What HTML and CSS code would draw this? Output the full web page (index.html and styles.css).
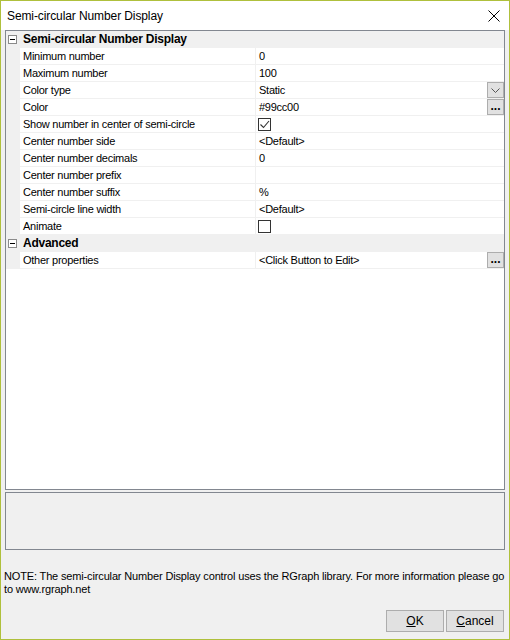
FILE: index.html
```html
<!DOCTYPE html>
<html lang="en">
<head>
    <meta charset="UTF-8">
    <meta name="viewport" content="width=device-width, initial-scale=1.0">
    <title>Semi-circular Number Display</title>
    <link rel="stylesheet" href="styles.css">
</head>
<body>

    <div class="window">
        <div class="titlebar">
            <span class="title">Semi-circular Number Display</span>
            <svg class="close" width="12" height="12" viewBox="0 0 12 12">
                <path d="M0.5 0.5 L11.5 11.5 M11.5 0.5 L0.5 11.5" stroke="#000" stroke-width="1" fill="none"/>
            </svg>
        </div>

        <div class="client">
            <div class="grid">
                <div class="category">
                    <span class="toggle"></span>
                    <span class="cat-name">Semi-circular Number Display</span>
                </div>
                <div class="prop"><div class="gutter"></div><div class="name">Minimum number</div><div class="value">0</div></div>
                <div class="prop"><div class="gutter"></div><div class="name">Maximum number</div><div class="value">100</div></div>
                <div class="prop"><div class="gutter"></div><div class="name">Color type</div><div class="value">Static<span class="btn-drop"><svg width="9" height="5" viewBox="0 0 9 5"><path d="M0.5 0.5 L4.5 4.5 L8.5 0.5" stroke="#555" fill="none"/></svg></span></div></div>
                <div class="prop"><div class="gutter"></div><div class="name">Color</div><div class="value">#99cc00<span class="btn-more">...</span></div></div>
                <div class="prop"><div class="gutter"></div><div class="name">Show number in center of semi-circle</div><div class="value"><span class="check"><svg width="11" height="11" viewBox="0 0 11 11"><path d="M1.5 5.5 L4.5 8.5 L10 2" stroke="#333" stroke-width="1.1" fill="none"/></svg></span></div></div>
                <div class="prop"><div class="gutter"></div><div class="name">Center number side</div><div class="value">&lt;Default&gt;</div></div>
                <div class="prop"><div class="gutter"></div><div class="name">Center number decimals</div><div class="value">0</div></div>
                <div class="prop"><div class="gutter"></div><div class="name">Center number prefix</div><div class="value"></div></div>
                <div class="prop"><div class="gutter"></div><div class="name">Center number suffix</div><div class="value">%</div></div>
                <div class="prop"><div class="gutter"></div><div class="name">Semi-circle line width</div><div class="value">&lt;Default&gt;</div></div>
                <div class="prop"><div class="gutter"></div><div class="name">Animate</div><div class="value"><span class="check"></span></div></div>
                <div class="category">
                    <span class="toggle"></span>
                    <span class="cat-name">Advanced</span>
                </div>
                <div class="prop"><div class="gutter"></div><div class="name">Other properties</div><div class="value">&lt;Click Button to Edit&gt;<span class="btn-more">...</span></div></div>
            </div>

            <div class="desc"></div>

            <p class="note">NOTE: The semi-circular Number Display control uses the RGraph library. For more information please go to www.rgraph.net</p>

            <div class="buttons">
                <button class="btn"><u>O</u>K</button>
                <button class="btn"><u>C</u>ancel</button>
            </div>
        </div>
    </div>

</body>
</html>
```

FILE: styles.css
```css
body {
    margin: 0; font-family: "Liberation Sans", Arial, sans-serif;
    font-size: 11px; letter-spacing: -0.25px; color: #000;
}

.window {
    width: 510px; height: 640px; box-sizing: border-box;
    border: 1px solid #afc03c; background: #f0f0f0;
    display: flex; flex-direction: column;
}

/* title bar */
.titlebar {
    height: 29px; flex: none; background: #fff;
    display: flex; align-items: center; justify-content: space-between;
    padding: 0 9px 0 6px;
}
.title { font-size: 12px; letter-spacing: -0.1px; }
.close { display: block; }

.client { flex: 1; display: flex; flex-direction: column; padding: 0 4px; }

/* property grid */
.grid {
    height: 460px; box-sizing: border-box; flex: none;
    border: 1px solid #828790; background: #fff;
}
.category, .prop { height: 16px; border-bottom: 1px solid #f0f0f0; display: flex; }
.category { background: #f0f0f0; align-items: center; }
.toggle {
    width: 7px; height: 7px; margin: 0 6px 0 2px; flex: none;
    border: 1px solid #8a8a8a; background: #fff; position: relative;
}
.toggle::after {
    content: ""; position: absolute; left: 1px; top: 3px;
    width: 5px; height: 1px; background: #000;
}
.cat-name { font-weight: bold; font-size: 12px; letter-spacing: -0.25px; }

.gutter { width: 14px; flex: none; background: #f0f0f0; }
.name {
    width: 236px; flex: none; padding-left: 3px; box-sizing: border-box;
    line-height: 16px; border-right: 1px solid #f0f0f0; white-space: nowrap;
}
.value {
    flex: 1; padding-left: 3px; line-height: 16px;
    display: flex; align-items: center; position: relative;
}

.btn-drop, .btn-more {
    position: absolute; right: 0; top: 0;
    width: 15px; height: 14px; box-sizing: content-box;
    background: #e1e1e1; border: 1px solid #adadad;
    display: flex; justify-content: center;
}
.btn-drop { align-items: center; }
.btn-more { font-weight: bold; font-size: 12px; line-height: 16px; letter-spacing: 0; align-items: flex-end; }

.check {
    width: 11px; height: 11px; margin-left: -1px;
    border: 1px solid #333; background: #fff;
    display: flex; align-items: center; justify-content: center;
}

.desc {
    height: 58px; margin-top: 2px; box-sizing: border-box; flex: none;
    border: 1px solid #828790; background: #f0f0f0;
}

.note { margin: 20px 0 0 -1px; line-height: 13px; letter-spacing: -0.15px; }

.buttons { display: flex; justify-content: flex-end; gap: 2px; margin-top: 14px; padding-right: 1px; }
.btn {
    width: 58px; height: 22px; padding: 0;
    background: #e1e1e1; border: 1px solid #adadad;
    font: inherit; font-size: 12px; letter-spacing: 0; color: #000;
}
```
